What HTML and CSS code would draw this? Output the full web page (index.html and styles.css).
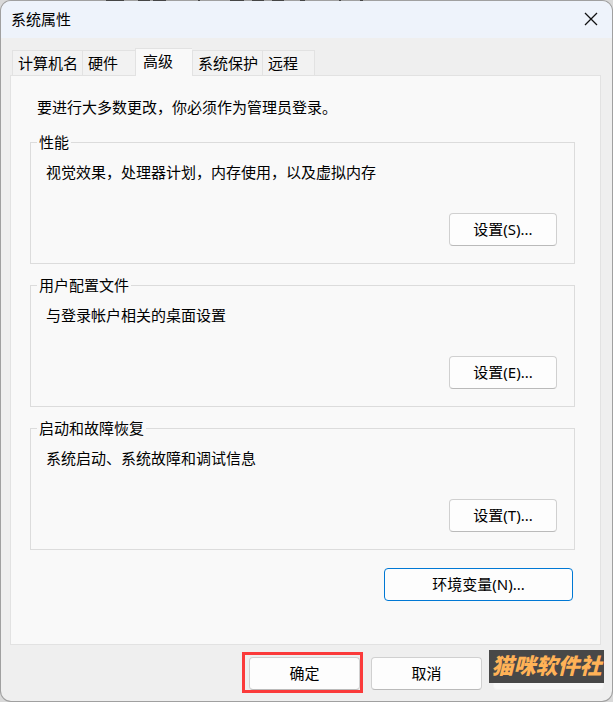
FILE: index.html
```html
<!DOCTYPE html>
<html lang="zh-CN">
<head>
<meta charset="utf-8">
<meta name="viewport" content="width=device-width, initial-scale=1">
<title>系统属性</title>
<link rel="stylesheet" href="styles.css">
</head>
<body>
<main class="dialog">
  <header class="titlebar">
    <h1 class="title">系统属性</h1>
    <button class="close" type="button" aria-label="关闭">
      <svg width="14" height="14" viewBox="0 0 14 14" fill="none" stroke="#111" stroke-width="1.3"><path d="M1 1L13 13M13 1L1 13"/></svg>
    </button>
  </header>

  <div class="content">
    <div class="tabs" role="tablist">
      <button class="tab" type="button" role="tab">计算机名</button>
      <button class="tab" type="button" role="tab">硬件</button>
      <button class="tab active" type="button" role="tab" aria-selected="true">高级</button>
      <button class="tab" type="button" role="tab">系统保护</button>
      <button class="tab" type="button" role="tab">远程</button>
    </div>

    <section class="panel" role="tabpanel">
      <p class="intro">要进行大多数更改，你必须作为管理员登录。</p>
      <div class="groups">
        <fieldset class="group">
          <legend>性能</legend>
          <div class="group-body">
            <p>视觉效果，处理器计划，内存使用，以及虚拟内存</p>
            <button class="btn" type="button">设置(S)...</button>
          </div>
        </fieldset>
        <fieldset class="group">
          <legend>用户配置文件</legend>
          <div class="group-body">
            <p>与登录帐户相关的桌面设置</p>
            <button class="btn" type="button">设置(E)...</button>
          </div>
        </fieldset>
        <fieldset class="group">
          <legend>启动和故障恢复</legend>
          <div class="group-body">
            <p>系统启动、系统故障和调试信息</p>
            <button class="btn" type="button">设置(T)...</button>
          </div>
        </fieldset>
      </div>
      <button class="btn env" type="button">环境变量(N)...</button>
    </section>
  </div>

  <footer class="actions">
    <div class="slot marked"><button class="btn wide" type="button">确定</button></div>
    <div class="slot"><button class="btn wide" type="button">取消</button></div>
    <div class="slot">
      <button class="btn wide faded" type="button" disabled aria-label="应用"></button>
      <span class="watermark">猫咪软件社</span>
    </div>
  </footer>
</main>
</body>
</html>
```
FILE: styles.css
```css
* {
  box-sizing: border-box;
}

body {
  margin: 0;
  min-height: 100vh;
  display: flex;
  background:
    linear-gradient(90deg, transparent 106px, #333 106px 124px, transparent 124px 138px, #333 138px 150px, transparent 150px 153px, #333 153px 166px, transparent 166px 198px, #333 198px 200px, transparent 200px 230px, #333 230px 244px, transparent 244px 252px, #333 252px 264px, transparent 264px 272px, #333 272px 284px, transparent 284px 300px, #333 300px 305px, transparent 305px 339px, #333 339px 341px, transparent 341px 360px, #333 360px 363px, transparent 363px) top / 100% 1px no-repeat,
    #d9d9d9;
  color: #000;
  font: 15px/20px "Noto Sans", "Noto Sans CJK SC", sans-serif;
}

button {
  font: inherit;
  color: inherit;
}

p,
h1 {
  margin: 0;
}

.dialog {
  flex: 1;
  display: flex;
  flex-direction: column;
  border: 1px solid rgba(90, 90, 90, 0.45);
  border-radius: 11px;
  background: #efefef padding-box;
}

.titlebar {
  display: flex;
  align-items: center;
  justify-content: space-between;
  height: 37px;
  padding: 0 10px 2px;
  border-radius: 10px 10px 0 0;
  background: #eef3fb;
}

.title {
  font-size: 15px;
  font-weight: 400;
}

.close {
  display: flex;
  padding: 4px;
  border: 0;
  background: none;
}

.content {
  flex: 1;
  display: flex;
  flex-direction: column;
  padding: 10px 11px 0 9px;
}

.tabs {
  display: flex;
  align-items: flex-end;
  padding-left: 2px;
}

.tab {
  height: 25px;
  min-width: 53px;
  padding: 0 4px 0 5px;
  border: 1px solid #e2e2e2;
  border-width: 1px 0 0 1px;
  background: #f2f2f2;
  text-align: left;
}

.tab:last-child {
  border-right-width: 1px;
}

.tab.active {
  height: 28px;
  min-width: 57px;
  margin-bottom: -1px;
  padding: 0 7px 4px;
  background: #f9f9f9;
  z-index: 1;
}

.panel {
  flex: 1;
  display: flex;
  flex-direction: column;
  padding: 21px 25px 20px 19px;
  border: 1px solid #e2e2e2;
  background: #f9f9f9;
}

.intro {
  padding-left: 7px;
}

.groups {
  display: grid;
  gap: 11px;
  margin: 15px 0 18px;
}

.group {
  margin: 0;
  min-width: 0;
  padding: 0;
  border: 1px solid #dcdcdc;
}

.group legend {
  margin-left: 6px;
  padding: 0 2px;
}

.group-body {
  display: flex;
  flex-direction: column;
  gap: 31px;
  padding: 10px 17px 17px 15px;
}

.btn {
  align-self: flex-end;
  height: 33px;
  min-width: 108px;
  padding: 0 12px 2px;
  border: 1px solid #d0d0d0;
  border-bottom-color: #bababa;
  border-radius: 4px;
  background: #fdfdfd;
}

.btn.env {
  min-width: 189px;
  margin-right: 2px;
  border-color: #0078d4;
}

.btn.wide {
  min-width: 111px;
}

.actions {
  display: flex;
  justify-content: flex-end;
  gap: 11px;
  padding: 12px 8px 11px;
}

.slot {
  position: relative;
  display: flex;
}

.marked::after {
  content: "";
  position: absolute;
  inset: -5px -3px -3px -7px;
  border: 3px solid #fb3a3a;
  pointer-events: none;
}

.btn.faded {
  border-color: #f3f3f3;
  background: #f8f8f8;
}

.watermark {
  position: absolute;
  inset: -7px 0 7px -4px;
  display: flex;
  align-items: center;
  justify-content: center;
  padding-bottom: 5px;
  background: #484848;
  color: #ffb257;
  font: italic 900 22px/28px "Noto Sans CJK SC", sans-serif;
  white-space: nowrap;
}
```
